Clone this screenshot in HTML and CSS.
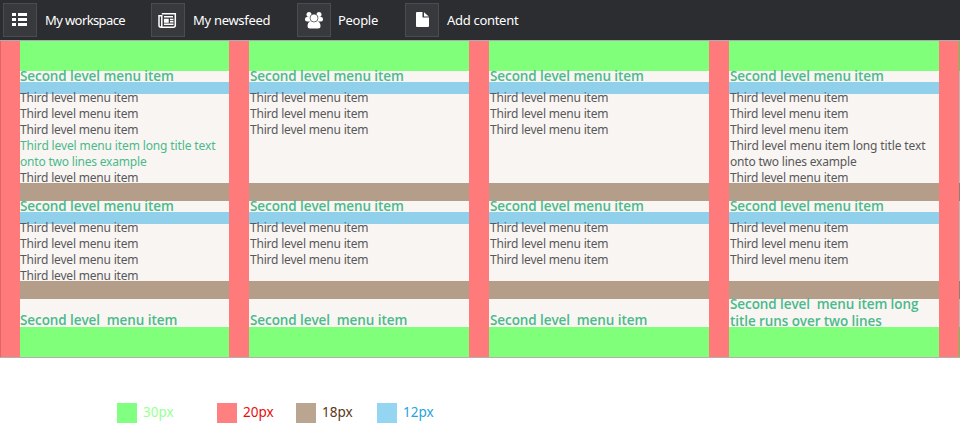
FILE: index.html
```html
<!DOCTYPE html>
<html lang="en">
<head>
<meta charset="utf-8">
<title>Menu spacing</title>
<link rel="stylesheet" href="styles.css">
</head>
<body>
<nav class="bar">
  <a class="tab tab-workspace"><span class="icon"><svg width="34" height="34" viewBox="0 0 34 34" fill="#fff"><path d="M9 10h4v3H9zM15 10h9v3h-9zM9 15h4v3H9zM15 15h9v3h-9zM9 20h4v3H9zM15 20h9v3h-9z"/></svg></span><span class="label">My workspace</span></a>
  <a class="tab tab-newsfeed"><span class="icon"><svg width="34" height="34" viewBox="0 0 34 34" fill="none" stroke="#fff" stroke-width="1.5"><path d="M10.800 10.800h13.500v11.400q0 2-2 2H10q-2 0-2-2v-9.400h2.800v9.400q0 2-1.400 2"/><path d="M13 13.700h9M19 16.500h3.500M19 18.800h3.500M13 21.300h9.500"/><path d="M13.700 16.500h3.300v2.500h-3.300z" fill="#fff"/></svg></span><span class="label">My newsfeed</span></a>
  <a class="tab tab-people"><span class="icon"><svg width="34" height="34" viewBox="0 0 34 34" fill="#fff"><circle cx="12" cy="11.500" r="2.500"/><circle cx="22" cy="11.500" r="2.500"/><rect x="8" y="14" width="7" height="4.500" rx="2"/><rect x="19" y="14" width="7" height="4.500" rx="2"/><path d="M13.500 18h7q3 1.500 3 5 0 2.500-2.500 2.500h-8q-2.500 0-2.500-2.500 0-3.500 3-5z"/><circle cx="17" cy="15" r="4" stroke="#38393d" stroke-width=".7"/></svg></span><span class="label">People</span></a>
  <a class="tab tab-add"><span class="icon"><svg width="34" height="34" viewBox="0 0 34 34" fill="#fff"><path d="M12 9h5.500v5.500H24V23q0 1-1 1H12q-1 0-1-1V10q0-1 1-1zM19 9.200l4.800 4.300H19z"/></svg></span><span class="label">Add content</span></a>
</nav>
<main class="panel">
  <section class="column">
    <div class="gap gap-30"></div>
    <h2>Second level menu item</h2>
    <div class="gap gap-12"></div>
    <ul class="upper"><li>Third level menu item</li><li>Third level menu item</li><li>Third level menu item</li><li class="active"><span class="long">Third level menu item long title text</span><br>onto two lines example</li><li>Third level menu item</li></ul>
    <div class="gap gap-18"></div>
    <h2>Second level menu item</h2>
    <div class="gap gap-12"></div>
    <ul class="lower"><li>Third level menu item</li><li>Third level menu item</li><li>Third level menu item</li><li>Third level menu item</li></ul>
    <div class="gap gap-18"></div>
    <h2 class="last">Second level&nbsp; menu item</h2>
    <div class="gap gap-30"></div>
  </section>
  <section class="column">
    <div class="gap gap-30"></div>
    <h2>Second level menu item</h2>
    <div class="gap gap-12"></div>
    <ul class="upper"><li>Third level menu item</li><li>Third level menu item</li><li>Third level menu item</li></ul>
    <div class="gap gap-18"></div>
    <h2>Second level menu item</h2>
    <div class="gap gap-12"></div>
    <ul class="lower"><li>Third level menu item</li><li>Third level menu item</li><li>Third level menu item</li></ul>
    <div class="gap gap-18"></div>
    <h2 class="last">Second level&nbsp; menu item</h2>
    <div class="gap gap-30"></div>
  </section>
  <section class="column">
    <div class="gap gap-30"></div>
    <h2>Second level menu item</h2>
    <div class="gap gap-12"></div>
    <ul class="upper"><li>Third level menu item</li><li>Third level menu item</li><li>Third level menu item</li></ul>
    <div class="gap gap-18"></div>
    <h2>Second level menu item</h2>
    <div class="gap gap-12"></div>
    <ul class="lower"><li>Third level menu item</li><li>Third level menu item</li><li>Third level menu item</li></ul>
    <div class="gap gap-18"></div>
    <h2 class="last">Second level&nbsp; menu item</h2>
    <div class="gap gap-30"></div>
  </section>
  <section class="column">
    <div class="gap gap-30"></div>
    <h2>Second level menu item</h2>
    <div class="gap gap-12"></div>
    <ul class="upper"><li>Third level menu item</li><li>Third level menu item</li><li>Third level menu item</li><li><span class="long">Third level menu item long title text</span><br>onto two lines example</li><li>Third level menu item</li></ul>
    <div class="gap gap-18"></div>
    <h2>Second level menu item</h2>
    <div class="gap gap-12"></div>
    <ul class="lower"><li>Third level menu item</li><li>Third level menu item</li><li>Third level menu item</li></ul>
    <div class="gap gap-18"></div>
    <h2 class="last">Second level&nbsp; menu item long<br>title runs over two lines</h2>
    <div class="gap gap-30"></div>
  </section>
  <div class="edge"></div>
</main>
<footer class="legend">
  <div class="key key-30"><i class="swatch"></i><span>30px</span></div>
  <div class="key key-20"><i class="swatch"></i><span>20px</span></div>
  <div class="key key-18"><i class="swatch"></i><span>18px</span></div>
  <div class="key key-12"><i class="swatch"></i><span>12px</span></div>
</footer>
</body>
</html>
```
FILE: styles.css
```css
* { box-sizing: border-box; }
body { margin: 0; width: 960px; height: 423px; overflow: hidden; background: #fff; font-family: "Noto Sans", "Open Sans", sans-serif; }
.bar { display: flex; height: 41px; padding: 3px 0 0 3px; background: #2c2d30; border-bottom: 1px solid #a9adaf; }
.tab { display: flex; height: 34px; color: #fff; font-size: 13px; line-height: 34px; white-space: nowrap; }
.tab-workspace { width: 148px; }
.tab-newsfeed { width: 146px; }
.tab-people { width: 108px; }
.icon { width: 34px; height: 34px; margin-right: 8px; background: #38393d; box-shadow: inset 0 0 0 1px #4b4c4f; }
.icon svg { display: block; }
.label { letter-spacing: -0.3px; }
.tab-workspace .label { letter-spacing: -0.6px; }
.tab-people .icon { margin-right: 7px; }
.panel { display: flex; gap: 20px; height: 317px; padding-left: 20px; background: #ff7b7b; border-bottom: 1px solid #b5b0ae; box-shadow: inset 1px 0 #e36666; }
.column { display: flex; flex-direction: column; flex: 0 0 220px; background: #f9f5f2; }
.column:first-child { flex-basis: 209px; }
.column:nth-child(4) { flex-basis: 210px; }
.edge { flex: 0 0 1px; background: linear-gradient(#5bcf55 30px, #bdb5b2 30px 142px, #967d6d 142px 160px, #bdb5b2 160px 240px, #967d6d 240px 258px, #bdb5b2 258px 286px, #5bcf55 286px); }
.gap { flex: none; }
.gap-30 { height: 30px; background: #80ff7b; }
.gap-18 { height: 18px; background: #b59e89; }
.gap-12 { height: 12px; background: #91d0eb; }
h2 { position: relative; flex: none; height: 14px; margin: -3px 0 0; color: #4aba8c; font-family: "Open Sans", "Noto Sans", sans-serif; font-size: 13.5px; font-weight: 600; line-height: 17px; letter-spacing: -0.08px; white-space: nowrap; }
h2.last { height: 31px; padding-top: 16px; }
.column:nth-child(4) h2.last { padding-top: 0; margin-top: -3px; height: 31px; }
ul { position: relative; list-style: none; margin: -4px 0 0; padding: 0; color: #58585a; font-size: 12px; line-height: 16px; letter-spacing: -0.2px; white-space: nowrap; }
.column + .column h2, .column + .column ul { padding-left: 1px; }
.upper { height: 93px; }
.lower { height: 61px; }
.active { color: #4aba8c; }
.long { letter-spacing: -0.13px; }
.legend { display: flex; padding: 45px 0 0 117px; font-size: 13.5px; line-height: 18px; }
.key { display: flex; gap: 6px; }
.key-30 { width: 100px; color: #9aff96; }
.key-20 { width: 79px; color: #e80c0c; }
.key-18 { width: 81px; color: #5c3715; }
.key-12 { color: #25a5de; }
.swatch { width: 20px; height: 20px; }
.key-30 .swatch { background: #80ff80; }
.key-20 .swatch { background: #ff8080; }
.key-18 .swatch { background: #baa591; }
.key-12 .swatch { background: #94d6f2; }
```
